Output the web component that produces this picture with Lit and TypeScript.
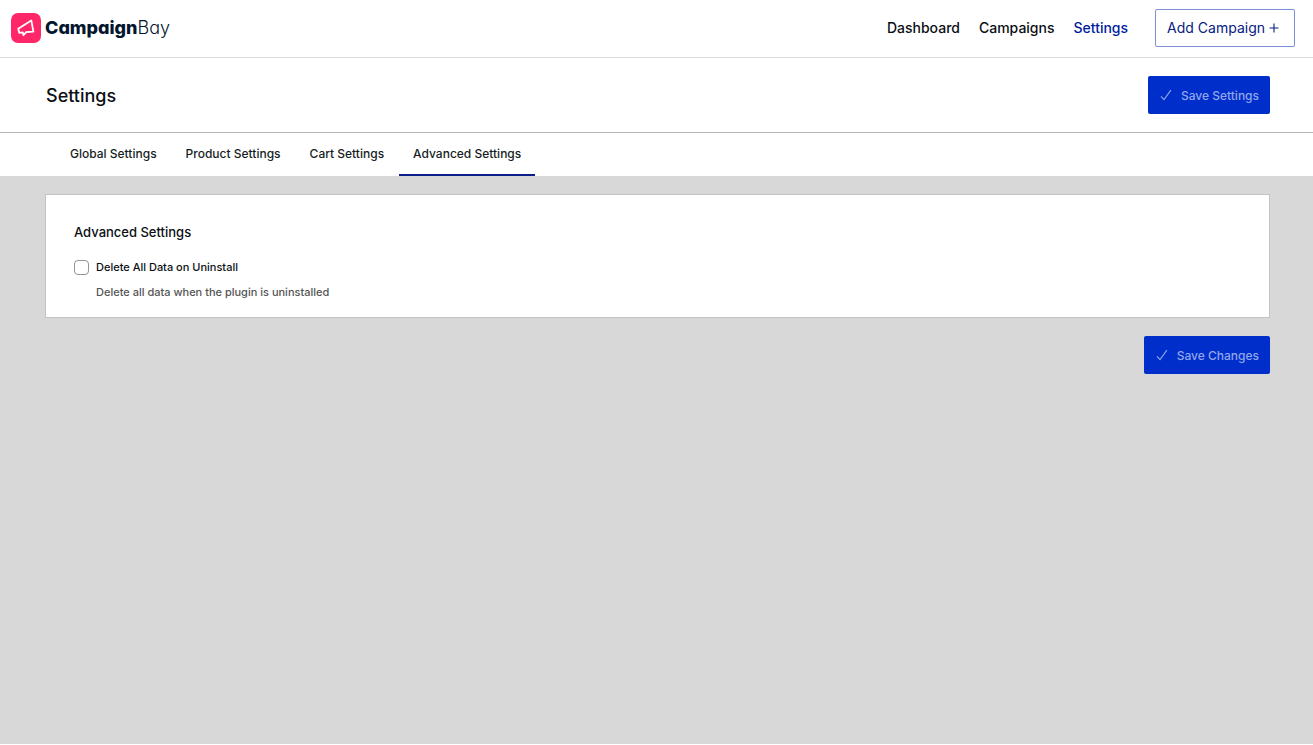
import { LitElement, html, css, svg } from "lit";
import { customElement, state } from "lit/decorators.js";

const NAV = ["Dashboard", "Campaigns", "Settings"];
const TABS = ["Global Settings", "Product Settings", "Cart Settings", "Advanced Settings"];

const check = svg`<svg class="check" viewBox="0 0 12 12" width="12" height="12" aria-hidden="true">
  <path d="M1 7.3 4 10.6 10.9 1.2" fill="none" stroke="currentColor" stroke-width="1.1" />
</svg>`;

@customElement("app-root")
export class AppRoot extends LitElement {
  @state() private tab = "Advanced Settings";

  static styles = css`
    :host {
      display: flex;
      flex-direction: column;
      box-sizing: border-box;
      min-height: 100vh;
      padding-bottom: 1px;
      background: #fff;
      color: #0b0f14;
      font-family: Inter, "Liberation Sans", sans-serif;
    }
    * { box-sizing: border-box; }
    a { color: inherit; text-decoration: none; }
    button { font-family: inherit; cursor: pointer; }
    h1, h2, p { margin: 0; }
    .top {
      display: flex;
      align-items: center;
      justify-content: space-between;
      height: 58px;
      padding: 0 18px 2px 11px;
      border-bottom: 1px solid #dcdcdc;
    }
    .brand { display: flex; align-items: center; gap: 4px; color: #04162e; font-size: 18px; line-height: 30px; }
    .brand b { font-weight: 800; }
    .word { font-weight: 300; font-feature-settings: "cv11"; }
    .nav { display: flex; align-items: center; gap: 19px; font-size: 14px; line-height: 20px; font-weight: 500; }
    .current { color: #001d9e; }
    .add {
      height: 38px;
      margin-left: 8px;
      padding: 0 15px 0 11px;
      border: 1px solid #7a90d8;
      border-radius: 2px;
      background: #fff;
      color: #06207f;
      font-size: 14px;
      font-weight: 400;
      display: flex;
      align-items: center;
      gap: 4px;
    }
    .head {
      display: flex;
      align-items: center;
      justify-content: space-between;
      height: 75px;
      padding: 0 43px 0 46px;
      border-bottom: 1px solid #b4b4b4;
    }
    h1 { font-size: 18px; line-height: 25px; font-weight: 500; }
    .save {
      display: flex;
      align-items: center;
      gap: 9px;
      height: 38px;
      padding: 0 11px 0 12px;
      border: 0;
      border-radius: 2px;
      background: #002ecb;
      color: #91a6ea;
      font-size: 12px;
      font-weight: 500;
    }
    .tabs { display: flex; gap: 1px; height: 43px; padding: 0 56px; }
    .tab {
      padding: 0 14px;
      border: 0;
      border-bottom: 2px solid transparent;
      background: none;
      color: #161d24;
      font-size: 12px;
      font-weight: 500;
    }
    .active { border-bottom-color: #0a1f8a; }
    .body {
      flex: 1;
      display: flex;
      flex-direction: column;
      align-items: flex-end;
      gap: 18px;
      padding: 18px 43px 18px 45px;
      background: #d8d8d8;
    }
    .card {
      align-self: stretch;
      padding: 27px 28px 16px;
      border: 1px solid #c3c3c3;
      background: #fff;
    }
    h2 { font-size: 13px; line-height: 20px; font-weight: 500; }
    .option { display: flex; align-items: center; gap: 7px; margin-top: 16px; font-size: 11px; line-height: 18px; font-weight: 500; }
    .box {
      appearance: none;
      width: 15px;
      height: 15px;
      margin: 0;
      border: 1px solid #949494;
      border-radius: 4px;
      background: #fff;
    }
    .box:checked { background: #002ecb; }
    .hint { margin: 7px 0 0 22px; color: #555; font-size: 11px; line-height: 18px; font-weight: 500; }
  `;

  render() {
    return html`
      <header class="top">
        <a class="brand" href="#">
          <svg width="30" height="30" viewBox="0 0 30 30" aria-hidden="true">
            <rect width="30" height="30" rx="7" fill="#ff2768" />
            <path d="M7.2 15.8 20.3 7.4 22.4 18.7 15.2 19.2 12.4 22.2 11.8 19.4 8.3 19.8Z"
              fill="none" stroke="#fff" stroke-width="1.8" stroke-linejoin="round" />
          </svg>
          <span class="word"><b>Campaign</b>Bay</span>
        </a>
        <nav class="nav">
          ${NAV.map((n) => html`<a class=${n === "Settings" ? "current" : ""} href="#">${n}</a>`)}
          <button class="add">Add Campaign
            <svg width="10" height="10" viewBox="0 0 10 10" aria-hidden="true">
              <path d="M5 .5v9M.5 5h9" stroke="currentColor" stroke-width="1.1" />
            </svg>
          </button>
        </nav>
      </header>
      <section class="head">
        <h1>Settings</h1>
        <button class="save">${check}Save Settings</button>
      </section>
      <div class="tabs" role="tablist">
        ${TABS.map((t) => html`<button role="tab" aria-selected=${t === this.tab ? "true" : "false"}
          class="tab ${t === this.tab ? "active" : ""}" @click=${() => (this.tab = t)}>${t}</button>`)}
      </div>
      <main class="body">
        <section class="card">
          <h2>Advanced Settings</h2>
          <div class="option">
            <input class="box" type="checkbox" id="wipe" aria-describedby="wipe-hint" />
            <label for="wipe">Delete All Data on Uninstall</label>
          </div>
          <p class="hint" id="wipe-hint">Delete all data when the plugin is uninstalled</p>
        </section>
        <button class="save">${check}Save Changes</button>
      </main>
    `;
  }
}
